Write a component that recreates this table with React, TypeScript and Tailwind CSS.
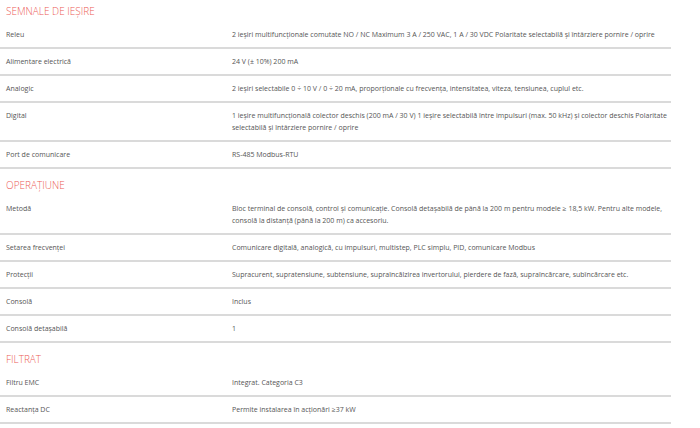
type Row = { label: string; value: string };
type Section = { title: string; rows: Row[] };

const sections: Section[] = [
  {
    title: "SEMNALE DE IEȘIRE",
    rows: [
      {
        label: "Releu",
        value:
          "2 ieșiri multifuncționale comutate NO / NC Maximum 3 A / 250 VAC, 1 A / 30 VDC Polaritate selectabilă și întârziere pornire / oprire",
      },
      { label: "Alimentare electrică", value: "24 V (± 10%) 200 mA" },
      {
        label: "Analogic",
        value:
          "2 ieșiri selectabile 0 ÷ 10 V / 0 ÷ 20 mA, proporționale cu frecvența, intensitatea, viteza, tensiunea, cuplul etc.",
      },
      {
        label: "Digital",
        value:
          "1 ieșire multifuncțională colector deschis (200 mA / 30 V) 1 ieșire selectabilă între impulsuri (max. 50 kHz) și colector deschis Polaritate selectabilă și întârziere pornire / oprire",
      },
      { label: "Port de comunicare", value: "RS-485 Modbus-RTU" },
    ],
  },
  {
    title: "OPERAȚIUNE",
    rows: [
      {
        label: "Metodă",
        value:
          "Bloc terminal de consolă, control și comunicație. Consolă detașabilă de până la 200 m pentru modele ≥ 18,5 kW. Pentru alte modele, consolă la distanță (până la 200 m) ca accesoriu.",
      },
      {
        label: "Setarea frecvenței",
        value:
          "Comunicare digitală, analogică, cu impulsuri, multistep, PLC simplu, PID, comunicare Modbus",
      },
      {
        label: "Protecții",
        value:
          "Supracurent, supratensiune, subtensiune, supraîncălzirea invertorului, pierdere de fază, supraîncărcare, subîncărcare etc.",
      },
      { label: "Consolă", value: "Inclus" },
      { label: "Consolă detașabilă", value: "1" },
    ],
  },
  {
    title: "FILTRAT",
    rows: [
      { label: "Filtru EMC", value: "Integrat. Categoria C3" },
      { label: "Reactanța DC", value: "Permite instalarea în acționări ≥37 kW" },
    ],
  },
];

export default function App() {
  return (
    <div
      className="h-[428px] w-[700px] overflow-hidden bg-white"
      style={{ fontFamily: '"Open Sans", "Noto Sans", sans-serif' }}
    >
      <div className="-mt-[5px] w-[671px]">
        {sections.map((section) => (
          <div key={section.title}>
            <h3 className="h-[27px] px-[6px] pt-[10px] text-[10px] leading-[12px] font-light text-[#ec5d57]">
              {section.title}
            </h3>
            {section.rows.map((row) => (
              <div
                key={row.label}
                className="flex border-b-2 border-[#dadada] pt-[7px] pb-[6px] text-[7px] leading-[12px] text-[#555]"
              >
                <div className="w-[232px] shrink-0 pl-[6px]">{row.label}</div>
                <div className="-mr-[12px] flex-1">{row.value}</div>
              </div>
            ))}
          </div>
        ))}
      </div>
    </div>
  );
}
